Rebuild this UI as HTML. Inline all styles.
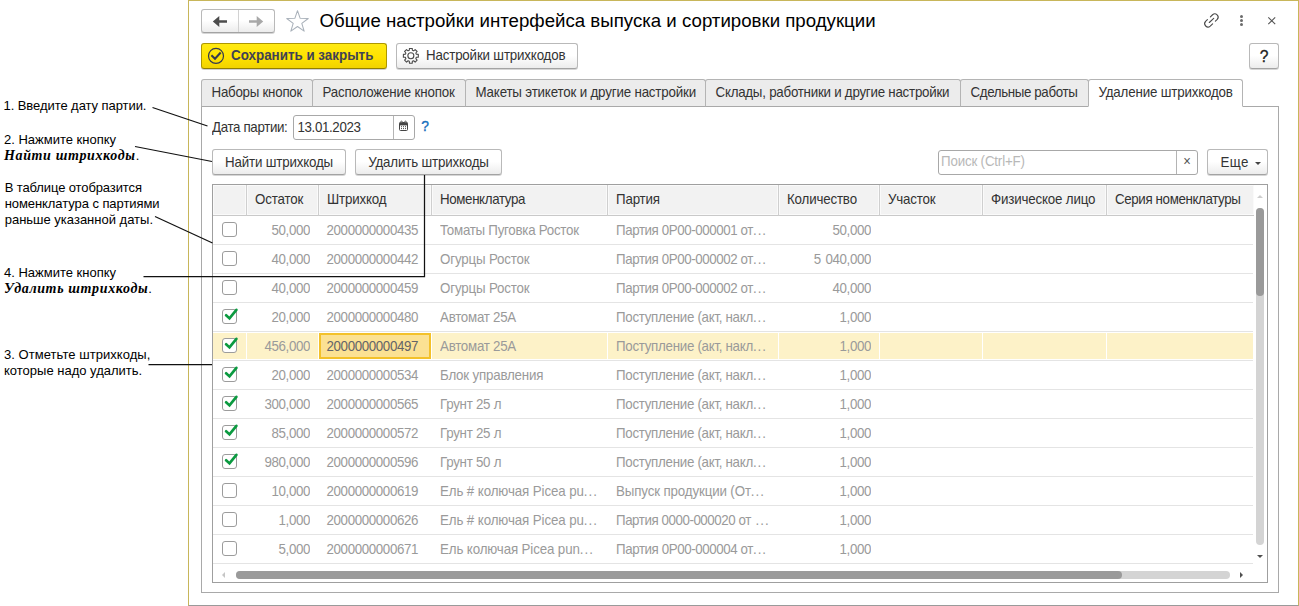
<!DOCTYPE html>
<html lang="ru">
<head>
<meta charset="utf-8">
<title>Общие настройки интерфейса выпуска и сортировки продукции</title>
<style>
html,body{margin:0;padding:0;background:#fff;}
body{width:1299px;height:606px;position:relative;overflow:hidden;font-family:"Liberation Sans",sans-serif;font-size:13.33px;letter-spacing:-0.17px;color:#333;}
.abs{position:absolute;}
div,span{box-sizing:border-box;}
.t{position:absolute;white-space:nowrap;line-height:16px;}
/* window */
#win{position:absolute;left:188px;top:0;width:1111px;height:606px;border:1px solid #c8b65a;border-bottom:1px solid #9a9a9a;background:#fff;}
/* buttons */
.btn{position:absolute;border:1px solid #b9b9b9;border-bottom-color:#a3a3a3;border-radius:3px;background:linear-gradient(#fff 0%,#fff 48%,#ececec 100%);box-shadow:0 1px 0.5px rgba(0,0,0,.16);color:#333;text-align:center;white-space:nowrap;}
.ybtn{position:absolute;border:1px solid #ad9700;border-bottom-color:#927f00;border-radius:3px;background:linear-gradient(#ffea12,#ffe200 55%,#f1d300);box-shadow:0 1px 0.5px rgba(0,0,0,.18);color:#3d3d3d;font-weight:bold;}
/* tabs */
.tab{position:absolute;top:79px;height:28px;border:1px solid #b4b4b4;border-bottom:1px solid #a9a9a9;border-radius:3px 3px 0 0;background:#ececec;line-height:26px;padding-left:9.5px;white-space:nowrap;color:#333;}
.tab.act{background:#fff;border-bottom:1px solid #fff;}
#panel{position:absolute;left:201px;top:106px;width:1078px;height:487px;border:1px solid #a9a9a9;background:#fff;}
/* inputs */
.inp{position:absolute;border:1px solid #a8a8a8;border-radius:3px;background:#fff;}
/* table */
#tbl{position:absolute;left:212px;top:184px;width:1056px;height:399px;border:1px solid #9f9f9f;background:#fff;overflow:hidden;}
.hd{position:absolute;top:0;height:31px;background:#f2f2f2;border-right:1px solid #cfcfcf;border-bottom:1px solid #c9c9c9;line-height:30px;padding-left:8px;white-space:nowrap;color:#333;box-shadow:inset 1px 1px 0 #fafafa,inset -1px -1px 0 #fafafa;}
.hd.last{border-right:none;}
.row{position:absolute;left:0;width:1040px;height:29px;border-bottom:1px solid #e4e4e4;color:#9a9a9a;}
.row .c{position:absolute;top:0;height:28px;line-height:29px;white-space:nowrap;}
.row .r{text-align:right;letter-spacing:-0.38px;}
.row .n{letter-spacing:-0.37px;}
.cb{position:absolute;left:9px;top:6px;width:15px;height:15px;border:1px solid #9c9c9c;border-radius:3px;background:#fff;}
.sy{display:inline-block;line-height:16px;transform:scaleY(1.08);transform-origin:0 12.6px;}
.el{letter-spacing:1.0px !important;}
.row.sel{background:#fdf2c8;box-shadow:inset 0 1px 0 #fff,inset 0 -1px 0 #fff;}
.ann{font-size:13px;letter-spacing:0;color:#000;line-height:15px;}
.bi{font-family:"Liberation Serif",serif;font-weight:bold;font-style:italic;font-size:14px;letter-spacing:0.63px;}
</style>
</head>
<body>
<div id="win"></div>
<!-- title bar -->
<div class="btn" style="left:201px;top:9px;width:74px;height:24px;"></div>
<div class="abs" style="left:238px;top:10px;width:1px;height:22px;background:#d2d2d2;"></div>
<svg class="abs" style="left:201px;top:9px;" width="74" height="24" viewBox="0 0 74 24">
<path d="M11.8 12.5 L18.3 6.9 L18.3 11.2 L26 11.2 L26 13.8 L18.3 13.8 L18.3 18.1 Z" fill="#4d4d4d"/>
<path d="M62.2 12.5 L55.7 6.9 L55.7 11.2 L48 11.2 L48 13.8 L55.7 13.8 L55.7 18.1 Z" fill="#a8a8a8"/>
</svg>
<svg class="abs" style="left:285px;top:9px;" width="25" height="24" viewBox="0 0 25 24">
<path d="M12.50 1.70 L15.16 9.34 L23.25 9.51 L16.80 14.40 L19.14 22.14 L12.50 17.52 L5.86 22.14 L8.20 14.40 L1.75 9.51 L9.84 9.34 Z" fill="#fff" stroke="#a9b1ba" stroke-width="1.05" stroke-linejoin="round"/>
</svg>
<div class="t" id="title" style="left:319.5px;top:9px;letter-spacing:0;font-size:18.67px;line-height:24px;color:#000;">Общие настройки интерфейса выпуска и сортировки продукции</div>
<svg class="abs" style="left:1201px;top:10px;" width="22" height="21" viewBox="0 0 22 21">
<g fill="none" stroke="#4a4a4a" stroke-width="1.12" stroke-linecap="round">
<path d="M9.4 6.85 L11.57 4.77 A3.3 3.3 0 0 1 16.23 9.43 L14.4 11.18"/>
<path d="M6.4 9.7 L4.57 11.47 A3.3 3.3 0 0 0 9.23 16.13 L11.6 13.86"/>
<path d="M8.3 12.5 L12.7 8.3"/>
</g>
</svg>
<div class="abs" style="left:1240px;top:15px;width:3px;height:3px;border-radius:50%;background:#6b6b6b;"></div>
<div class="abs" style="left:1240px;top:19px;width:3px;height:3px;border-radius:50%;background:#6b6b6b;"></div>
<div class="abs" style="left:1240px;top:23px;width:3px;height:3px;border-radius:50%;background:#6b6b6b;"></div>
<svg class="abs" style="left:1267px;top:16px;" width="10" height="10" viewBox="0 0 10 10"><path d="M1.3 1.3 L8.2 8.2 M8.2 1.3 L1.3 8.2" stroke="#555" stroke-width="1.1" fill="none"/></svg>

<!-- command bar -->
<div class="ybtn" style="left:201px;top:43px;width:186px;height:26px;"></div>
<svg class="abs" style="left:207px;top:47px;" width="18" height="18" viewBox="0 0 18 18"><circle cx="9" cy="8.9" r="7.5" fill="none" stroke="#353a50" stroke-width="1.2"/><path d="M4.4 8.2 L8 11.7 L13.7 5.5" fill="none" stroke="#353a50" stroke-width="2"/></svg>
<div class="t" style="left:231px;top:48px;font-weight:bold;letter-spacing:0;font-size:13.4px;color:#3f4254;"><span class="sy">Сохранить и закрыть</span></div>
<div class="btn" style="left:396px;top:43px;width:182px;height:26px;"></div>
<svg class="abs" style="left:402px;top:48px;" width="18" height="17" viewBox="0 0 18 17"><g fill="none" stroke="#4a4a4a" stroke-width="1.1" stroke-linejoin="round"><circle cx="8.85" cy="7.80" r="3"/><path d="M7.33 2.31 L7.47 0.33 L10.23 0.33 L10.37 2.31 L11.66 2.84 L13.15 1.54 L15.11 3.50 L13.81 4.99 L14.34 6.28 L16.32 6.42 L16.32 9.18 L14.34 9.32 L13.81 10.61 L15.11 12.10 L13.15 14.06 L11.66 12.76 L10.37 13.29 L10.23 15.27 L7.47 15.27 L7.33 13.29 L6.04 12.76 L4.55 14.06 L2.59 12.10 L3.89 10.61 L3.36 9.32 L1.38 9.18 L1.38 6.42 L3.36 6.28 L3.89 4.99 L2.59 3.50 L4.55 1.54 L6.04 2.84 Z"/></g></svg>
<div class="t" style="left:426px;top:48px;"><span class="sy">Настройки штрихкодов</span></div>
<div class="btn" style="left:1249px;top:43px;width:30px;height:26px;"></div>
<div class="t" style="left:1249px;top:49px;width:30px;text-align:center;font-size:15.6px;letter-spacing:0;color:#222;-webkit-text-stroke:0.3px #222;"><span class="sy">?</span></div>

<div id="panel"></div>

<!-- tabs -->
<div class="tab" style="left:201px;width:112px;letter-spacing:-0.25px;"><span class="sy">Наборы кнопок</span></div>
<div class="tab" style="left:312px;width:154px;"><span class="sy">Расположение кнопок</span></div>
<div class="tab" style="left:465px;width:241px;"><span class="sy">Макеты этикеток и другие настройки</span></div>
<div class="tab" style="left:705px;width:256px;letter-spacing:-0.24px;"><span class="sy">Склады, работники и другие настройки</span></div>
<div class="tab" style="left:960px;width:129px;letter-spacing:-0.37px;"><span class="sy">Сдельные работы</span></div>
<div class="tab act" style="left:1088px;width:155px;"><span class="sy">Удаление штрихкодов</span></div>

<!-- date field -->
<div class="t" style="left:212px;top:120px;letter-spacing:-0.35px;"><span class="sy">Дата партии:</span></div>
<div class="inp" style="left:293px;top:115px;width:122px;height:25px;"></div>
<div class="abs" style="left:393px;top:116px;width:1px;height:23px;background:#b4b4b4;"></div>
<div class="t" style="left:297.5px;top:120px;color:#333;letter-spacing:-0.37px;"><span class="sy">13.01.2023</span></div>
<svg class="abs" style="left:398px;top:120px;" width="12" height="12" viewBox="0 0 12 12"><rect x="1.5" y="2.5" width="8" height="8" rx="1" fill="#fff" stroke="#444" stroke-width="1"/><rect x="1.5" y="2.5" width="8" height="2.9" fill="#444"/><circle cx="3.5" cy="1.9" r="0.8" fill="#fff" stroke="#444" stroke-width="0.8"/><circle cx="7.5" cy="1.9" r="0.8" fill="#fff" stroke="#444" stroke-width="0.8"/><g fill="#444"><rect x="3" y="6.2" width="1" height="1"/><rect x="5" y="6.2" width="1" height="1"/><rect x="7" y="6.2" width="1" height="1"/><rect x="3" y="8.1" width="1" height="1"/><rect x="5" y="8.1" width="1" height="1"/><rect x="7" y="8.1" width="1" height="1"/></g></svg>
<div class="t" style="left:421.3px;top:119px;color:#176fbd;font-size:13.8px;letter-spacing:0;-webkit-text-stroke:0.35px #176fbd;"><span class="sy">?</span></div>

<!-- table command bar -->
<div class="btn" style="left:212px;top:149px;width:134px;height:26px;line-height:26px;"><span class="sy">Найти штрихкоды</span></div>
<div class="btn" style="left:355px;top:149px;width:147px;height:26px;line-height:26px;"><span class="sy">Удалить штрихкоды</span></div>
<div class="inp" style="left:938px;top:150px;width:260px;height:25px;"></div>
<div class="abs" style="left:1176px;top:151px;width:1px;height:23px;background:#b4b4b4;"></div>
<div class="t" style="left:941px;top:154px;color:#b8b8b8;"><span class="sy">Поиск (Ctrl+F)</span></div>
<div class="t" style="left:1177px;top:154px;width:20px;text-align:center;color:#555;font-size:13px;"><span class="sy">×</span></div>
<div class="btn" style="left:1207px;top:149px;width:61px;height:26px;"></div>
<div class="t" style="left:1220.5px;top:155px;letter-spacing:0.45px;"><span class="sy">Еще</span></div>
<div class="abs" style="left:1254.5px;top:161.5px;width:0;height:0;border-left:3.3px solid transparent;border-right:3.3px solid transparent;border-top:3.6px solid #444;"></div>
<div id="tbl">
<div class="hd" style="left:0px;width:34px;"></div>
<div class="hd" style="left:34px;width:72px;"><span class="sy">Остаток</span></div>
<div class="hd" style="left:106px;width:113px;"><span class="sy">Штрихкод</span></div>
<div class="hd" style="left:219px;width:176px;letter-spacing:-0.37px;"><span class="sy">Номенклатура</span></div>
<div class="hd" style="left:395px;width:171px;"><span class="sy">Партия</span></div>
<div class="hd" style="left:566px;width:101px;"><span class="sy">Количество</span></div>
<div class="hd" style="left:667px;width:103px;"><span class="sy">Участок</span></div>
<div class="hd" style="left:770px;width:124px;"><span class="sy">Физическое лицо</span></div>
<div class="hd last" style="left:894px;width:147px;letter-spacing:-0.37px;"><span class="sy">Серия номенклатуры</span></div>
<div class="row" style="top:31px;">
<div class="cb"></div>
<div class="c r" style="left:33px;width:64px;"><span class="sy">50,000</span></div>
<div class="c n" style="left:113.5px;"><span class="sy">2000000000435</span></div>
<div class="c" style="left:227px;"><span class="sy"><span style="letter-spacing:-0.265px">Томаты Пуговка Росток</span></span></div>
<div class="c" style="left:403px;"><span class="sy"><span style="letter-spacing:-0.410px">Партия 0Р00-000001 от<span class="el">...</span></span></span></div>
<div class="c r" style="left:565px;width:93px;word-spacing:1.5px;"><span class="sy">50,000</span></div>
</div>
<div class="row" style="top:60px;">
<div class="cb"></div>
<div class="c r" style="left:33px;width:64px;"><span class="sy">40,000</span></div>
<div class="c n" style="left:113.5px;"><span class="sy">2000000000442</span></div>
<div class="c" style="left:227px;"><span class="sy">Огурцы Росток</span></div>
<div class="c" style="left:403px;"><span class="sy"><span style="letter-spacing:-0.410px">Партия 0Р00-000002 от<span class="el">...</span></span></span></div>
<div class="c r" style="left:565px;width:93px;word-spacing:1.5px;"><span class="sy">5 040,000</span></div>
</div>
<div class="row" style="top:89px;">
<div class="cb"></div>
<div class="c r" style="left:33px;width:64px;"><span class="sy">40,000</span></div>
<div class="c n" style="left:113.5px;"><span class="sy">2000000000459</span></div>
<div class="c" style="left:227px;"><span class="sy">Огурцы Росток</span></div>
<div class="c" style="left:403px;"><span class="sy"><span style="letter-spacing:-0.410px">Партия 0Р00-000002 от<span class="el">...</span></span></span></div>
<div class="c r" style="left:565px;width:93px;word-spacing:1.5px;"><span class="sy">40,000</span></div>
</div>
<div class="row" style="top:118px;">
<div class="cb"></div>
<svg class="abs" style="left:8px;top:2px;" width="20" height="20" viewBox="0 0 20 20"><path d="M5.1 10.3 L8.5 13.4 L15.4 4.9" fill="none" stroke="#0b9a40" stroke-width="2.7" stroke-linecap="round" stroke-linejoin="miter"/></svg>
<div class="c r" style="left:33px;width:64px;"><span class="sy">20,000</span></div>
<div class="c n" style="left:113.5px;"><span class="sy">2000000000480</span></div>
<div class="c" style="left:227px;"><span class="sy"><span style="letter-spacing:-0.260px">Автомат 25А</span></span></div>
<div class="c" style="left:403px;"><span class="sy"><span style="letter-spacing:-0.290px">Поступление (акт, накл<span class="el">...</span></span></span></div>
<div class="c r" style="left:565px;width:93px;word-spacing:1.5px;"><span class="sy">1,000</span></div>
</div>
<div class="row sel" style="top:147px;">
<div class="abs" style="left:33px;top:0;width:1px;height:28px;background:#fff;"></div>
<div class="abs" style="left:105px;top:0;width:1px;height:28px;background:#fff;"></div>
<div class="abs" style="left:218px;top:0;width:1px;height:28px;background:#fff;"></div>
<div class="abs" style="left:394px;top:0;width:1px;height:28px;background:#fff;"></div>
<div class="abs" style="left:565px;top:0;width:1px;height:28px;background:#fff;"></div>
<div class="abs" style="left:666px;top:0;width:1px;height:28px;background:#fff;"></div>
<div class="abs" style="left:769px;top:0;width:1px;height:28px;background:#fff;"></div>
<div class="abs" style="left:893px;top:0;width:1px;height:28px;background:#fff;"></div>
<div class="abs" style="left:106px;top:1px;width:112px;height:26px;background:#fbe193;border:2px solid #f3c12a;"></div>
<div class="cb"></div>
<svg class="abs" style="left:8px;top:2px;" width="20" height="20" viewBox="0 0 20 20"><path d="M5.1 10.3 L8.5 13.4 L15.4 4.9" fill="none" stroke="#0b9a40" stroke-width="2.7" stroke-linecap="round" stroke-linejoin="miter"/></svg>
<div class="c r" style="left:33px;width:64px;"><span class="sy">456,000</span></div>
<div class="c n" style="left:113.5px;color:#646468;"><span class="sy">2000000000497</span></div>
<div class="c" style="left:227px;"><span class="sy"><span style="letter-spacing:-0.260px">Автомат 25А</span></span></div>
<div class="c" style="left:403px;"><span class="sy"><span style="letter-spacing:-0.290px">Поступление (акт, накл<span class="el">...</span></span></span></div>
<div class="c r" style="left:565px;width:93px;word-spacing:1.5px;"><span class="sy">1,000</span></div>
</div>
<div class="row" style="top:176px;">
<div class="cb"></div>
<svg class="abs" style="left:8px;top:2px;" width="20" height="20" viewBox="0 0 20 20"><path d="M5.1 10.3 L8.5 13.4 L15.4 4.9" fill="none" stroke="#0b9a40" stroke-width="2.7" stroke-linecap="round" stroke-linejoin="miter"/></svg>
<div class="c r" style="left:33px;width:64px;"><span class="sy">20,000</span></div>
<div class="c n" style="left:113.5px;"><span class="sy">2000000000534</span></div>
<div class="c" style="left:227px;"><span class="sy"><span style="letter-spacing:-0.200px">Блок управления</span></span></div>
<div class="c" style="left:403px;"><span class="sy"><span style="letter-spacing:-0.290px">Поступление (акт, накл<span class="el">...</span></span></span></div>
<div class="c r" style="left:565px;width:93px;word-spacing:1.5px;"><span class="sy">1,000</span></div>
</div>
<div class="row" style="top:205px;">
<div class="cb"></div>
<svg class="abs" style="left:8px;top:2px;" width="20" height="20" viewBox="0 0 20 20"><path d="M5.1 10.3 L8.5 13.4 L15.4 4.9" fill="none" stroke="#0b9a40" stroke-width="2.7" stroke-linecap="round" stroke-linejoin="miter"/></svg>
<div class="c r" style="left:33px;width:64px;"><span class="sy">300,000</span></div>
<div class="c n" style="left:113.5px;"><span class="sy">2000000000565</span></div>
<div class="c" style="left:227px;"><span class="sy"><span style="letter-spacing:-0.270px">Грунт 25 л</span></span></div>
<div class="c" style="left:403px;"><span class="sy"><span style="letter-spacing:-0.290px">Поступление (акт, накл<span class="el">...</span></span></span></div>
<div class="c r" style="left:565px;width:93px;word-spacing:1.5px;"><span class="sy">1,000</span></div>
</div>
<div class="row" style="top:234px;">
<div class="cb"></div>
<svg class="abs" style="left:8px;top:2px;" width="20" height="20" viewBox="0 0 20 20"><path d="M5.1 10.3 L8.5 13.4 L15.4 4.9" fill="none" stroke="#0b9a40" stroke-width="2.7" stroke-linecap="round" stroke-linejoin="miter"/></svg>
<div class="c r" style="left:33px;width:64px;"><span class="sy">85,000</span></div>
<div class="c n" style="left:113.5px;"><span class="sy">2000000000572</span></div>
<div class="c" style="left:227px;"><span class="sy"><span style="letter-spacing:-0.270px">Грунт 25 л</span></span></div>
<div class="c" style="left:403px;"><span class="sy"><span style="letter-spacing:-0.290px">Поступление (акт, накл<span class="el">...</span></span></span></div>
<div class="c r" style="left:565px;width:93px;word-spacing:1.5px;"><span class="sy">1,000</span></div>
</div>
<div class="row" style="top:263px;">
<div class="cb"></div>
<svg class="abs" style="left:8px;top:2px;" width="20" height="20" viewBox="0 0 20 20"><path d="M5.1 10.3 L8.5 13.4 L15.4 4.9" fill="none" stroke="#0b9a40" stroke-width="2.7" stroke-linecap="round" stroke-linejoin="miter"/></svg>
<div class="c r" style="left:33px;width:64px;"><span class="sy">980,000</span></div>
<div class="c n" style="left:113.5px;"><span class="sy">2000000000596</span></div>
<div class="c" style="left:227px;"><span class="sy"><span style="letter-spacing:-0.270px">Грунт 50 л</span></span></div>
<div class="c" style="left:403px;"><span class="sy"><span style="letter-spacing:-0.290px">Поступление (акт, накл<span class="el">...</span></span></span></div>
<div class="c r" style="left:565px;width:93px;word-spacing:1.5px;"><span class="sy">1,000</span></div>
</div>
<div class="row" style="top:292px;">
<div class="cb"></div>
<div class="c r" style="left:33px;width:64px;"><span class="sy">10,000</span></div>
<div class="c n" style="left:113.5px;"><span class="sy">2000000000619</span></div>
<div class="c" style="left:227px;"><span class="sy"><span style="letter-spacing:-0.110px">Ель # колючая Picea pu<span class="el">...</span></span></span></div>
<div class="c" style="left:403px;"><span class="sy"><span style="letter-spacing:-0.135px">Выпуск продукции (От<span class="el">...</span></span></span></div>
<div class="c r" style="left:565px;width:93px;word-spacing:1.5px;"><span class="sy">1,000</span></div>
</div>
<div class="row" style="top:321px;">
<div class="cb"></div>
<div class="c r" style="left:33px;width:64px;"><span class="sy">1,000</span></div>
<div class="c n" style="left:113.5px;"><span class="sy">2000000000626</span></div>
<div class="c" style="left:227px;"><span class="sy"><span style="letter-spacing:-0.110px">Ель # колючая Picea pu<span class="el">...</span></span></span></div>
<div class="c" style="left:403px;"><span class="sy"><span style="letter-spacing:-0.440px">Партия 0000-000020 от<span class="el"> ...</span></span></span></div>
<div class="c r" style="left:565px;width:93px;word-spacing:1.5px;"><span class="sy">1,000</span></div>
</div>
<div class="row" style="top:350px;">
<div class="cb"></div>
<div class="c r" style="left:33px;width:64px;"><span class="sy">5,000</span></div>
<div class="c n" style="left:113.5px;"><span class="sy">2000000000671</span></div>
<div class="c" style="left:227px;"><span class="sy"><span style="letter-spacing:-0.130px">Ель колючая Picea pun<span class="el">...</span></span></span></div>
<div class="c" style="left:403px;"><span class="sy"><span style="letter-spacing:-0.410px">Партия 0Р00-000004 от<span class="el">...</span></span></span></div>
<div class="c r" style="left:565px;width:93px;word-spacing:1.5px;"><span class="sy">1,000</span></div>
</div>
<div class="abs" style="left:1043px;top:23px;width:8px;height:337px;border-radius:4px;background:#d4d4d4;"></div>
<div class="abs" style="left:1043px;top:23px;width:8px;height:88px;border-radius:4px;background:#9a9a9a;"></div>
<div class="abs" style="left:1043.5px;top:9.5px;width:0;height:0;border-left:3.3px solid transparent;border-right:3.3px solid transparent;border-bottom:3.6px solid #cdcdcd;"></div>
<div class="abs" style="left:1043.7px;top:370px;width:0;height:0;border-left:3.3px solid transparent;border-right:3.3px solid transparent;border-top:3.8px solid #505050;"></div>
<div class="abs" style="left:23px;top:386px;width:994px;height:8px;border-radius:4px;background:#d4d4d4;"></div>
<div class="abs" style="left:23px;top:386px;width:886px;height:8px;border-radius:4px;background:#9a9a9a;"></div>
<div class="abs" style="left:9px;top:386.8px;width:0;height:0;border-top:3.3px solid transparent;border-bottom:3.3px solid transparent;border-right:3.8px solid #c6c6c6;"></div>
<div class="abs" style="left:1027px;top:386.7px;width:0;height:0;border-top:3.3px solid transparent;border-bottom:3.3px solid transparent;border-left:3.8px solid #505050;"></div>
</div>

<!-- annotations -->
<div class="t ann" style="left:3.5px;top:98px;letter-spacing:-0.065px;">1. Введите дату партии.</div>
<div class="t ann" style="left:4px;top:132px;">2. Нажмите кнопку</div>
<div class="t ann" style="left:4px;top:148px;"><span class="bi">Найти штрихкоды</span>.</div>
<div class="t ann" style="left:4.7px;top:180px;letter-spacing:-0.11px;">В таблице отобразится</div>
<div class="t ann" style="left:4.7px;top:196px;letter-spacing:-0.07px;">номенклатура с партиями</div>
<div class="t ann" style="left:4.7px;top:212px;">раньше указанной даты.</div>
<div class="t ann" style="left:4px;top:265px;">4. Нажмите кнопку</div>
<div class="t ann" style="left:4px;top:281px;"><span class="bi">Удалить штрихкоды</span>.</div>
<div class="t ann" style="left:4px;top:347px;letter-spacing:0.05px;">3. Отметьте штрихкоды,</div>
<div class="t ann" style="left:4px;top:363px;">которые надо удалить.</div>
<svg class="abs" style="left:0;top:0;pointer-events:none;" width="1299" height="606" viewBox="0 0 1299 606">
<g stroke="#111" stroke-width="1.25" fill="none">
<path d="M152.5 107.5 L207.5 126"/>
<path d="M135 146.5 L212 161.5"/>
<path d="M155 216.5 L212.5 243"/>
<path d="M143.5 276.5 L424.5 276.5 L424.5 175"/>
<path d="M148.5 364.5 L212 364.5"/>
</g>
</svg>
</body>
</html>
